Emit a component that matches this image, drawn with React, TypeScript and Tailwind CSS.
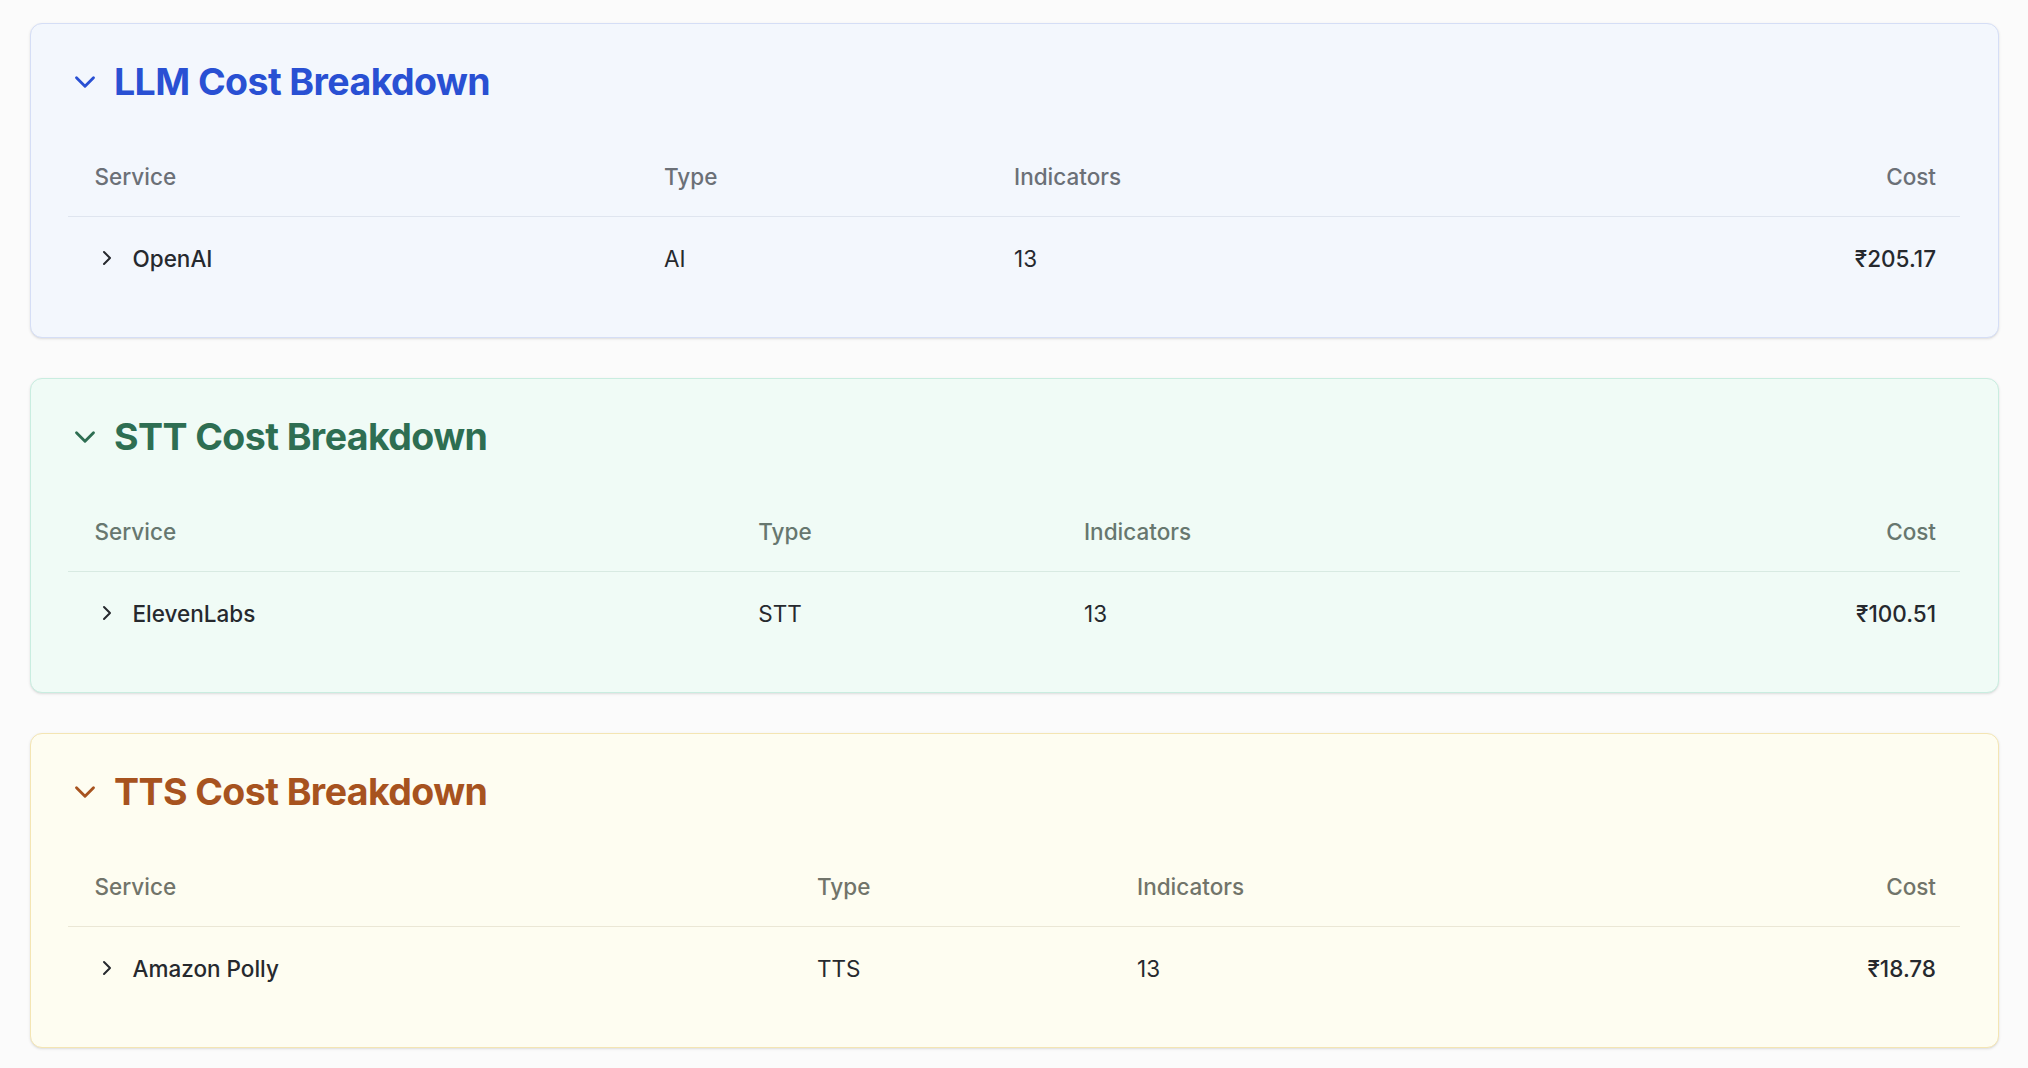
import { ChevronDown, ChevronRight } from 'lucide-react';

type Section = {
  title: string;
  service: string;
  type: string;
  indicators: number;
  cost: string;
  card: string;
  heading: string;
  head: string;
  divider: string;
  cols: string;
};

const sections: Section[] = [
  {
    title: 'LLM Cost Breakdown',
    service: 'OpenAI',
    type: 'AI',
    indicators: 13,
    cost: '₹205.17',
    card: 'bg-[#f3f7fd] border-[#d5def6]',
    heading: 'text-[#2950d3]',
    head: 'text-[#6b7077]',
    divider: 'border-[#dfe5ef]',
    cols: 'grid-cols-[569.5px_350px_1fr_auto]',
  },
  {
    title: 'STT Cost Breakdown',
    service: 'ElevenLabs',
    type: 'STT',
    indicators: 13,
    cost: '₹100.51',
    card: 'bg-[#f0fbf6] border-[#c9ede0]',
    heading: 'text-[#2e6e52]',
    head: 'text-[#67776f]',
    divider: 'border-[#d8eae2]',
    cols: 'grid-cols-[663.8px_325.7px_1fr_auto]',
  },
  {
    title: 'TTS Cost Breakdown',
    service: 'Amazon Polly',
    type: 'TTS',
    indicators: 13,
    cost: '₹18.78',
    card: 'bg-[#fefdf1] border-[#f4e5b3]',
    heading: 'text-[#a7531f]',
    head: 'text-[#71746a]',
    divider: 'border-[#ebe7d6]',
    cols: 'grid-cols-[722.5px_320px_1fr_auto]',
  },
];

function CostCard({ s }: { s: Section }) {
  return (
    <div className={`rounded-xl border shadow-sm p-[37.5px] ${s.card}`}>
      <div className="flex items-center gap-3 h-10 mb-9">
        <ChevronDown size={34} strokeWidth={2} className={s.heading} />
        <h2 className={`text-[37.5px] leading-10 font-bold tracking-[-0.58px] ${s.heading}`}>
          {s.title}
        </h2>
      </div>

      <div className={`grid ${s.cols} text-[22.5px] leading-[31px]`}>
        <div className={`contents font-medium ${s.head}`}>
          <div className={`px-[26.5px] py-[23.5px] border-b ${s.divider}`}>Service</div>
          <div className={`px-[26.5px] py-[23.5px] border-b ${s.divider}`}>Type</div>
          <div className={`px-[26.5px] py-[23.5px] border-b ${s.divider}`}>Indicators</div>
          <div className={`pl-[26.5px] pr-6 py-[23.5px] border-b text-right ${s.divider}`}>Cost</div>
        </div>
        <div className="contents text-[#26292e]">
          <div className="px-[26.5px] py-[26px] flex items-center gap-[14px]">
            <ChevronRight size={24} strokeWidth={2} className="text-[#26292e]" />
            <span className="font-medium">{s.service}</span>
          </div>
          <div className="px-[26.5px] py-[26px]">{s.type}</div>
          <div className="px-[26.5px] py-[26px]">{s.indicators}</div>
          <div className="pl-[26.5px] pr-6 py-[26px] text-right font-medium">{s.cost}</div>
        </div>
      </div>
    </div>
  );
}

export default function App() {
  return (
    <div
      className="min-h-screen bg-[#fbfbfb] px-[29.5px] pt-[23px] pb-6 flex flex-col gap-10"
      style={{ fontFamily: 'Inter, "Noto Sans", sans-serif' }}
    >
      {sections.map((s) => (
        <CostCard key={s.title} s={s} />
      ))}
    </div>
  );
}
